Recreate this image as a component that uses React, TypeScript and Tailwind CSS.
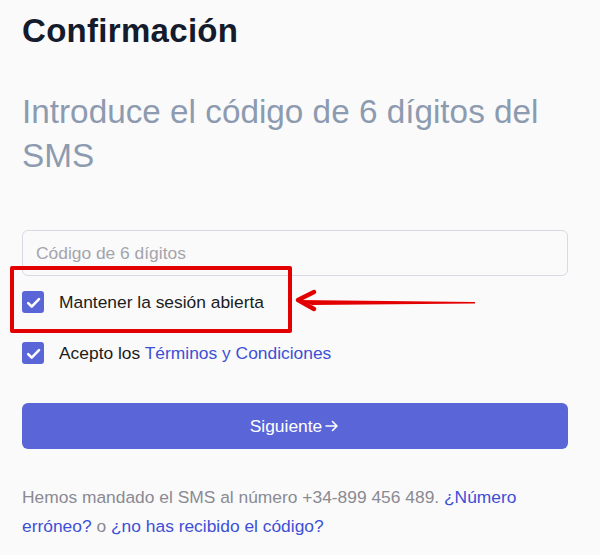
import React from "react";

const Check = () => (
  <span className="flex h-[22px] w-[22px] shrink-0 items-center justify-center rounded-[3px] bg-[#5a66d8]">
    <svg viewBox="0 0 16 16" className="h-[17px] w-[17px]" fill="none">
      <path d="M3 8.6l3.3 3.2L13.2 4.8" stroke="#fff" strokeWidth="2.4" strokeLinecap="round" strokeLinejoin="round" />
    </svg>
  </span>
);

const App = () => {
  return (
    <div className="relative min-h-[555px] w-[600px] bg-[#fafafa] px-[22px] pt-[12px] font-['Liberation_Sans',Arial,sans-serif]">
      <h1 className="text-[33px] font-bold leading-[38px] tracking-[0.3px] text-[#141b2d]">Confirmación</h1>

      <p className="mt-[40px] text-[33.3px] leading-[44px] text-[#8d9bb0]">
        Introduce el código de 6 dígitos del SMS
      </p>

      <input
        className="mt-[52px] block h-[46px] w-[546px] rounded-[6px] border border-[#d9d9e6] bg-[#fafafa] px-[13px] text-[17.4px] text-[#1a1a1a] outline-none placeholder:text-[#a4a4ac]"
        placeholder="Código de 6 dígitos"
      />

      <div className="mt-[15px] flex flex-col gap-[29px]">
        <label className="flex items-center gap-[15px] text-[17.4px] leading-[22px] text-[#1c1c1c]">
          <Check />
          <span>Mantener la sesión abierta</span>
        </label>
        <label className="flex items-center gap-[15px] text-[17.4px] leading-[22px] text-[#1c1c1c]">
          <Check />
          <span>
            Acepto los <a className="text-[#3d4fd6]">Términos y Condiciones</a>
          </span>
        </label>
      </div>

      <button className="mt-[39px] flex h-[46px] w-[546px] items-center justify-center gap-[2px] rounded-[6px] bg-[#5a66d8] text-[17.4px] text-white">
        Siguiente
        <svg viewBox="0 0 16 16" className="h-[16px] w-[16px]" fill="none">
          <path d="M2 8h11M8.5 3.5L13 8l-4.5 4.5" stroke="#fff" strokeWidth="1.6" strokeLinecap="round" strokeLinejoin="round" />
        </svg>
      </button>

      <p className="mt-[34px] pb-[10px] text-[17.4px] leading-[29px] text-[#8a8a93]">
        Hemos mandado el SMS al número +34-899 456 489.{" "}
        <a className="text-[#3d4fd6]">¿Número erróneo?</a> o{" "}
        <a className="text-[#3d4fd6]">¿no has recibido el código?</a>
      </p>

      {/* annotation overlay */}
      <div className="pointer-events-none absolute left-[10px] top-[266px] h-[67px] w-[282px] rounded-[2px] border-[4px] border-[#e30000]" />
      <svg className="pointer-events-none absolute left-[294px] top-[288px]" width="185" height="26" viewBox="0 0 185 26">
        <path d="M4 12 L181 14 L181 15.5 L18 17 Z" fill="#e30000" />
        <path d="M20 4 L4 12 L20 21" stroke="#e30000" strokeWidth="4.5" fill="none" strokeLinecap="round" strokeLinejoin="round" />
      </svg>
    </div>
  );
};

export default App;
